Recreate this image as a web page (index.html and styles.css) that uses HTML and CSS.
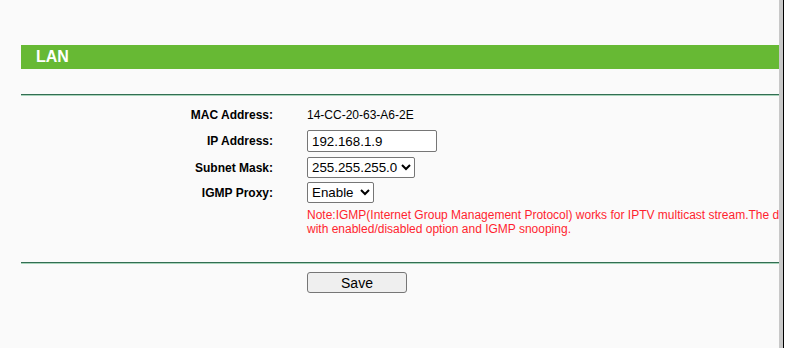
FILE: index.html
```html
<!DOCTYPE html>
<html>
<head>
<meta charset="utf-8">
<link rel="stylesheet" href="styles.css">
</head>
<body>
<div class="frame">
  <div class="main">
    <div class="title-bar">LAN</div>
    <div class="rule rule-top"></div>
    <div class="form">
      <div class="row row-mac">
        <div class="label">MAC Address:</div>
        <div class="value">14-CC-20-63-A6-2E</div>
      </div>
      <div class="row row-ip">
        <div class="label">IP Address:</div>
        <div class="value"><input class="text-input" type="text" value="192.168.1.9"></div>
      </div>
      <div class="row row-mask">
        <div class="label">Subnet Mask:</div>
        <div class="value">
          <select class="select">
            <option>255.255.255.0</option>
            <option>255.255.0.0</option>
            <option>255.0.0.0</option>
          </select>
        </div>
      </div>
      <div class="row row-igmp">
        <div class="label">IGMP Proxy:</div>
        <div class="value">
          <select class="select">
            <option>Enable</option>
            <option>Disable</option>
          </select>
        </div>
      </div>
      <div class="note-row">
        <div class="note">
          <div class="note-line">Note:IGMP(Internet Group Management Protocol) works for IPTV multicast stream.The device supports both IGMP proxy mode</div>
          <div class="note-line">with enabled/disabled option and IGMP snooping.</div>
        </div>
      </div>
    </div>
    <div class="rule rule-bottom"></div>
    <div class="actions">
      <button class="save-btn" type="button">Save</button>
    </div>
  </div>
  <div class="scroll-strip"></div>
  <div class="edge-dark"></div>
  <div class="edge-light"></div>
</div>
</body>
</html>
```
FILE: styles.css
```css
html, body {
  margin: 0;
  padding: 0;
  height: 100%;
  background: #fafafa;
  font-family: "Liberation Sans", Arial, sans-serif;
}

.frame {
  display: flex;
  height: 348px;
  width: 787px;
}

.main {
  flex: 1;
  min-width: 0;
  overflow: hidden;
  padding: 45px 0 0 21px;
  background: #fafafa;
}

.title-bar {
  height: 24px;
  line-height: 24px;
  background: #67b934;
  color: #ffffff;
  font-weight: bold;
  font-size: 16px;
  padding-left: 15px;
  width: 1200px;
}

.rule {
  height: 1px;
  border-top: 1px solid #326e52;
  background: #a9d4bb;
  width: 1200px;
}

.rule-top {
  margin-top: 25px;
}

.rule-bottom {
  margin-top: 26px;
}

.form {
  padding-top: 8px;
  display: flex;
  flex-direction: column;
}

.row {
  display: flex;
  align-items: center;
}

.row-mac { height: 22px; }
.row-ip { height: 22px; margin-top: 4px; }
.row-mask { height: 21px; margin-top: 5px; }
.row-igmp { height: 21px; margin-top: 4px; }

.label {
  width: 252px;
  text-align: right;
  font-weight: bold;
  font-size: 12px;
  color: #000;
  flex: none;
}

.value {
  margin-left: 34px;
  font-size: 12px;
  color: #000;
  display: flex;
  align-items: center;
}

.text-input {
  box-sizing: border-box;
  width: 130px;
  height: 22px;
  margin: 0;
  padding: 0 4px;
  border: 1px solid #767676;
  border-radius: 2px;
  background: #ffffff;
  font-family: "Liberation Sans", Arial, sans-serif;
  font-size: 13.33px;
  color: #000;
}

.select {
  box-sizing: border-box;
  height: 21px;
  margin: 0;
  border: 1px solid #767676;
  border-radius: 2px;
  background: #ffffff;
  font-family: "Liberation Sans", Arial, sans-serif;
  font-size: 13.33px;
  color: #000;
}

.note-row {
  margin-top: 5px;
  padding-left: 286px;
}

.note {
  color: #ff1f2f;
  font-size: 12px;
  line-height: 14px;
}

.note-line {
  white-space: nowrap;
}

.actions {
  padding: 8px 0 0 286px;
}

.save-btn {
  box-sizing: border-box;
  width: 100px;
  height: 21px;
  margin: 0;
  padding: 0;
  border: 1px solid #767676;
  border-radius: 3px;
  background: #efefef;
  font-family: "Liberation Sans", Arial, sans-serif;
  font-size: 14px;
  color: #000;
}

.scroll-strip {
  width: 4px;
  flex: none;
  background: #c8c8c8;
}

.edge-dark {
  width: 1px;
  flex: none;
  background: #000;
}

.edge-light {
  width: 3px;
  flex: none;
  background: #ffffff;
}
```
